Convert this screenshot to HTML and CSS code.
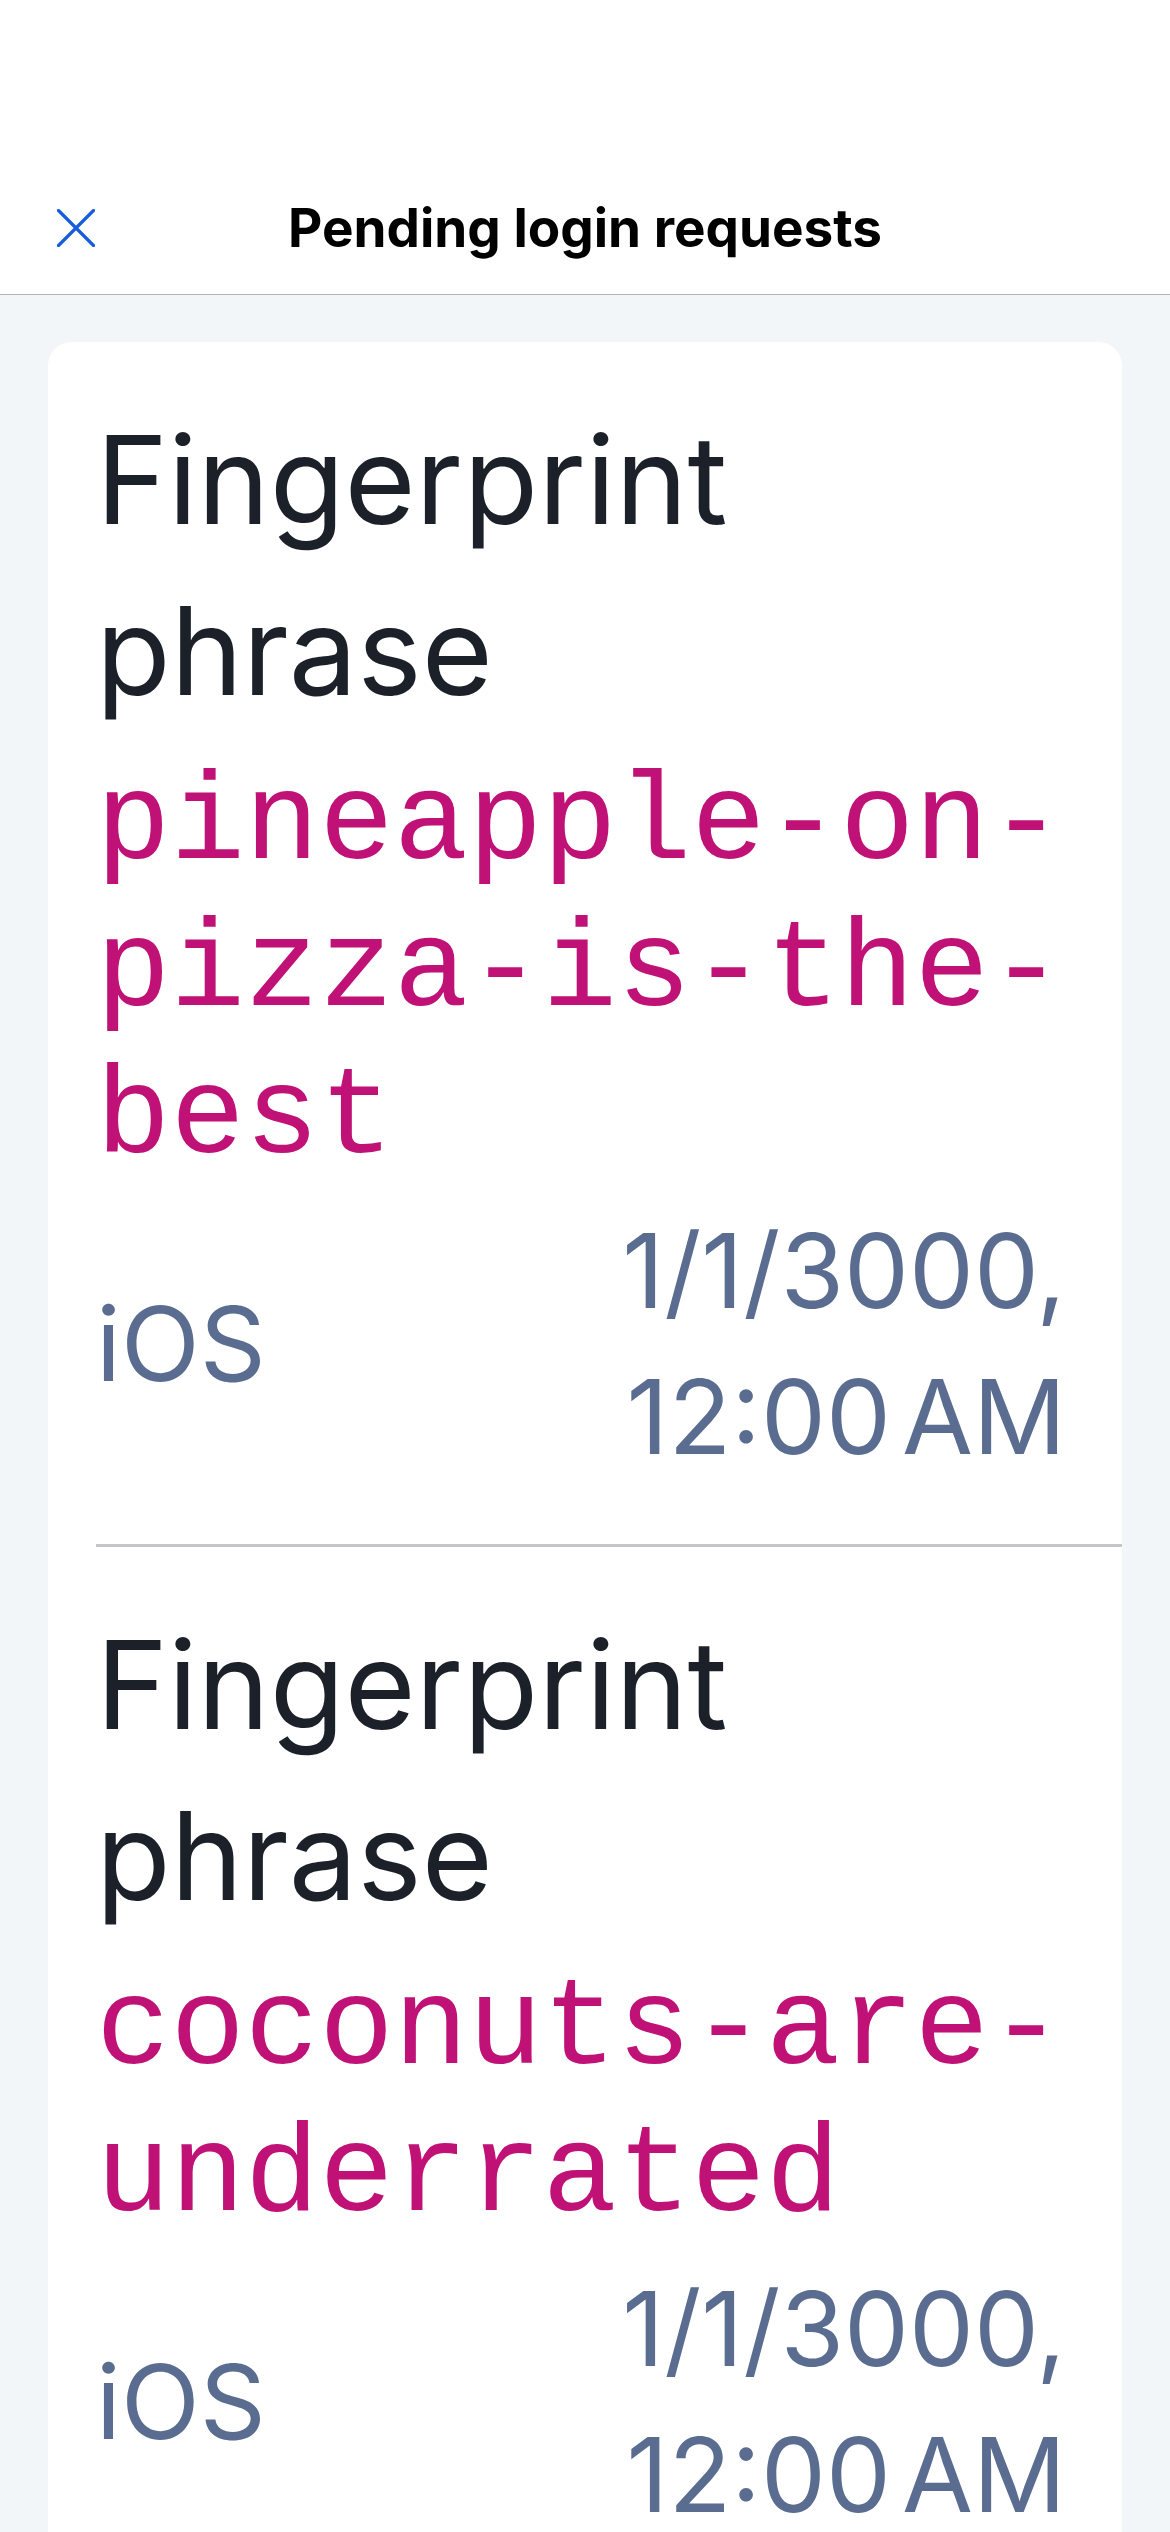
FILE: index.html
```html
<!DOCTYPE html>
<html lang="en">
<head>
<meta charset="utf-8">
<title>Pending login requests</title>
<link rel="stylesheet" href="styles.css">
</head>
<body>
<header class="topbar">
  <div class="navrow">
    <button class="close" aria-label="Close">
      <svg viewBox="0 0 38 38" width="38" height="38"><path d="M1.5 1.5 L36.5 36.5 M36.5 1.5 L1.5 36.5" stroke="#175ddc" stroke-width="3.2" stroke-linecap="round" fill="none"/></svg>
    </button>
    <h1 class="title">Pending login requests</h1>
    <span class="spacer"></span>
  </div>
</header>
<main class="page">
  <section class="card">
    <article class="item">
      <div class="label">Fingerprint phrase</div>
      <div class="phrase">pineapple-on-pizza-is-the-best</div>
      <div class="meta">
        <span class="device">iOS</span>
        <span class="date">1/1/3000, 12:00 AM</span>
      </div>
    </article>
    <article class="item">
      <div class="label">Fingerprint phrase</div>
      <div class="phrase">coconuts-are-underrated</div>
      <div class="meta">
        <span class="device">iOS</span>
        <span class="date">1/1/3000, 12:00 AM</span>
      </div>
    </article>
  </section>
</main>
</body>
</html>
```
FILE: styles.css
```css
html, body {
  margin: 0;
  padding: 0;
}
body {
  background: #f3f6f9;
  font-family: "Inter", "Noto Sans", sans-serif;
}
.topbar {
  background: #ffffff;
  height: 294px;
  border-bottom: 1px solid #b3b3b5;
  display: flex;
  flex-direction: column;
  justify-content: flex-end;
}
.navrow {
  height: 132px;
  display: grid;
  grid-template-columns: 1fr auto 1fr;
  align-items: center;
}
.close {
  justify-self: start;
  margin-left: 57px;
  padding: 0;
  border: 0;
  background: none;
  width: 38px;
  height: 38px;
  display: block;
}
.close svg {
  display: block;
}
.title {
  margin: 0;
  font-size: 53px;
  font-weight: 700;
  color: #000000;
  line-height: normal;
}
.page {
  padding: 47px 48px 0 48px;
}
.card {
  background: #ffffff;
  border-radius: 24px;
  padding-left: 48px;
  overflow: hidden;
}
.item {
  padding: 52px 48px 54px 0;
  border-bottom: 3px solid #c6c6c8;
}
.label {
  font-size: 122px;
  line-height: 171px;
  color: #1b2029;
  font-weight: 400;
}
.phrase {
  margin-top: 16px;
  font-family: "Liberation Mono", "DejaVu Sans Mono", monospace;
  font-size: 124px;
  line-height: 147px;
  color: #c01176;
}
.meta {
  margin-top: 5px;
  display: grid;
  grid-template-columns: 1fr 1fr;
  align-items: center;
  column-gap: 24px;
  color: #5a6d91;
  font-size: 103px;
  line-height: 146px;
}
.device {
  justify-self: start;
}
.date {
  text-align: right;
  padding-right: 8px;
  word-spacing: -18px;
}
```
